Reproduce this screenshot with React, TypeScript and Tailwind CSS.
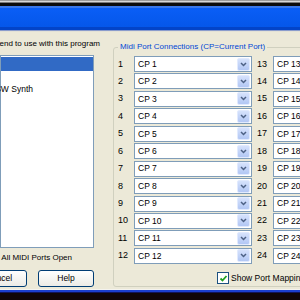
const rows = Array.from({ length: 12 }, (_, i) => i + 1);

const Combo = ({ label }: { label: string }) => (
  <div className="flex h-[16px] w-[118px] shrink-0 items-center border border-[#7f9db9] bg-white">
    <span className="flex-1 pl-[3px] text-[8.5px] leading-none text-black">{label}</span>
    <span className="mr-px flex h-[13px] w-[13px] items-center justify-center rounded-[2px] border border-[#e1eafe] bg-gradient-to-b from-[#d6e2fc] to-[#b2c7f4]">
      <svg width="7" height="5" viewBox="0 0 7 5">
        <path d="M1 1 L3.5 3.5 L6 1" fill="none" stroke="#4d6185" strokeWidth="1.5" />
      </svg>
    </span>
  </div>
);

const PortRow = ({ n }: { n: number }) => (
  <div className="flex h-[16px] items-center">
    <span className="w-[16px] shrink-0 text-[9px] leading-none text-black">{n}</span>
    <Combo label={`CP ${n}`} />
    <span className="ml-[5px] w-[16px] shrink-0 text-[9px] leading-none text-black">{n + 12}</span>
    <Combo label={`CP ${n + 12}`} />
  </div>
);

const XpButton = ({ label, className }: { label: string; className?: string }) => (
  <div
    className={`flex h-[17px] w-[56px] shrink-0 items-center justify-center rounded-[3px] border border-[#003c74] bg-gradient-to-b from-white to-[#ecebe6] text-[8.5px] text-black ${className ?? ""}`}
  >
    {label}
  </div>
);

export default function App() {
  return (
    <div className="flex h-[300px] w-[300px] flex-col overflow-hidden bg-[#ece9d8] font-['Liberation_Sans',Arial,sans-serif] text-[8px]">
      {/* desktop strip and title bar */}
      <div className="h-px shrink-0 bg-[#9c9c9c]" />
      <div className="h-px shrink-0 bg-[#d8d8d8]" />
      <div className="h-px shrink-0 bg-[#7a7a7a]" />
      <div className="h-[3px] shrink-0 bg-[#0c0c0c]" />
      <div className="h-[2px] shrink-0 bg-[#3a78ea]" />
      <div className="h-[19px] shrink-0 bg-gradient-to-b from-[#0a5ef6] to-[#0557ea]" />
      <div className="h-[3px] shrink-0 bg-[#0344c8]" />
      <div className="h-px shrink-0 bg-[#8a9ccc]" />
      <div className="h-px shrink-0 bg-[#e4e2d6]" />

      {/* dialog body */}
      <div className="flex h-[257px] shrink-0">
        <div className="flex w-[100px] shrink-0 flex-col">
          <div className="mt-[7px] flex h-[10px] justify-end">
            <span className="whitespace-nowrap leading-[10px] text-black">
              Select the MIDI ports you intend to use with this program
            </span>
          </div>
          <div className="mt-[6px] h-[193px] w-[94px] border border-[#7f9db9] bg-white pt-px">
            <div className="h-[14px] w-[92px] bg-[#316ac5]" />
            <div className="mt-[11px] flex h-[14px] w-[32px] items-center justify-end">
              <span className="whitespace-nowrap text-[8.5px] text-black">Microsoft GS Wavetable SW Synth</span>
            </div>
          </div>
          <div className="mt-[5px] flex h-[10px] w-[72px] items-center justify-end">
            <span className="whitespace-nowrap leading-[10px] text-black">Keep All MIDI Ports Open</span>
          </div>
          <div className="mt-[7px] flex gap-[11px]">
            <XpButton label="Cancel" className="ml-[-29px]" />
            <XpButton label="Help" />
          </div>
        </div>

        <div className="relative ml-[13px] mt-[15px] flex h-[240px] w-[260px] shrink-0 flex-col rounded-[3px] border border-[#d0d0bf] pl-[4px] pt-[8px]">
          <span className="absolute -top-[6px] left-[4px] bg-[#ece9d8] px-[2px] leading-[10px] whitespace-nowrap text-[#0046d5]">
            Midi Port Connections (CP=Current Port)
          </span>
          <div className="flex flex-col gap-y-[1.45px]">
            {rows.map((n) => (
              <PortRow key={n} n={n} />
            ))}
          </div>
          <div className="mt-[8px] flex items-center pl-[99px]">
            <span className="flex h-[12px] w-[12px] items-center justify-center border border-[#1c5180] bg-white">
              <svg width="9" height="9" viewBox="0 0 9 9">
                <path d="M1.5 4.5 L3.5 6.5 L7.5 2" fill="none" stroke="#21a121" strokeWidth="1.8" />
              </svg>
            </span>
            <span className="ml-[2px] whitespace-nowrap text-[8.5px] text-black">Show Port Mapping</span>
          </div>
        </div>
      </div>

      {/* window bottom frame and desktop */}
      <div className="h-px shrink-0 bg-[#f4f3ee]" />
      <div className="h-[2px] shrink-0 bg-[#1c3fcf]" />
      <div className="h-px shrink-0 bg-[#12145a]" />
      <div className="flex-1 bg-[#100508]" />
    </div>
  );
}
